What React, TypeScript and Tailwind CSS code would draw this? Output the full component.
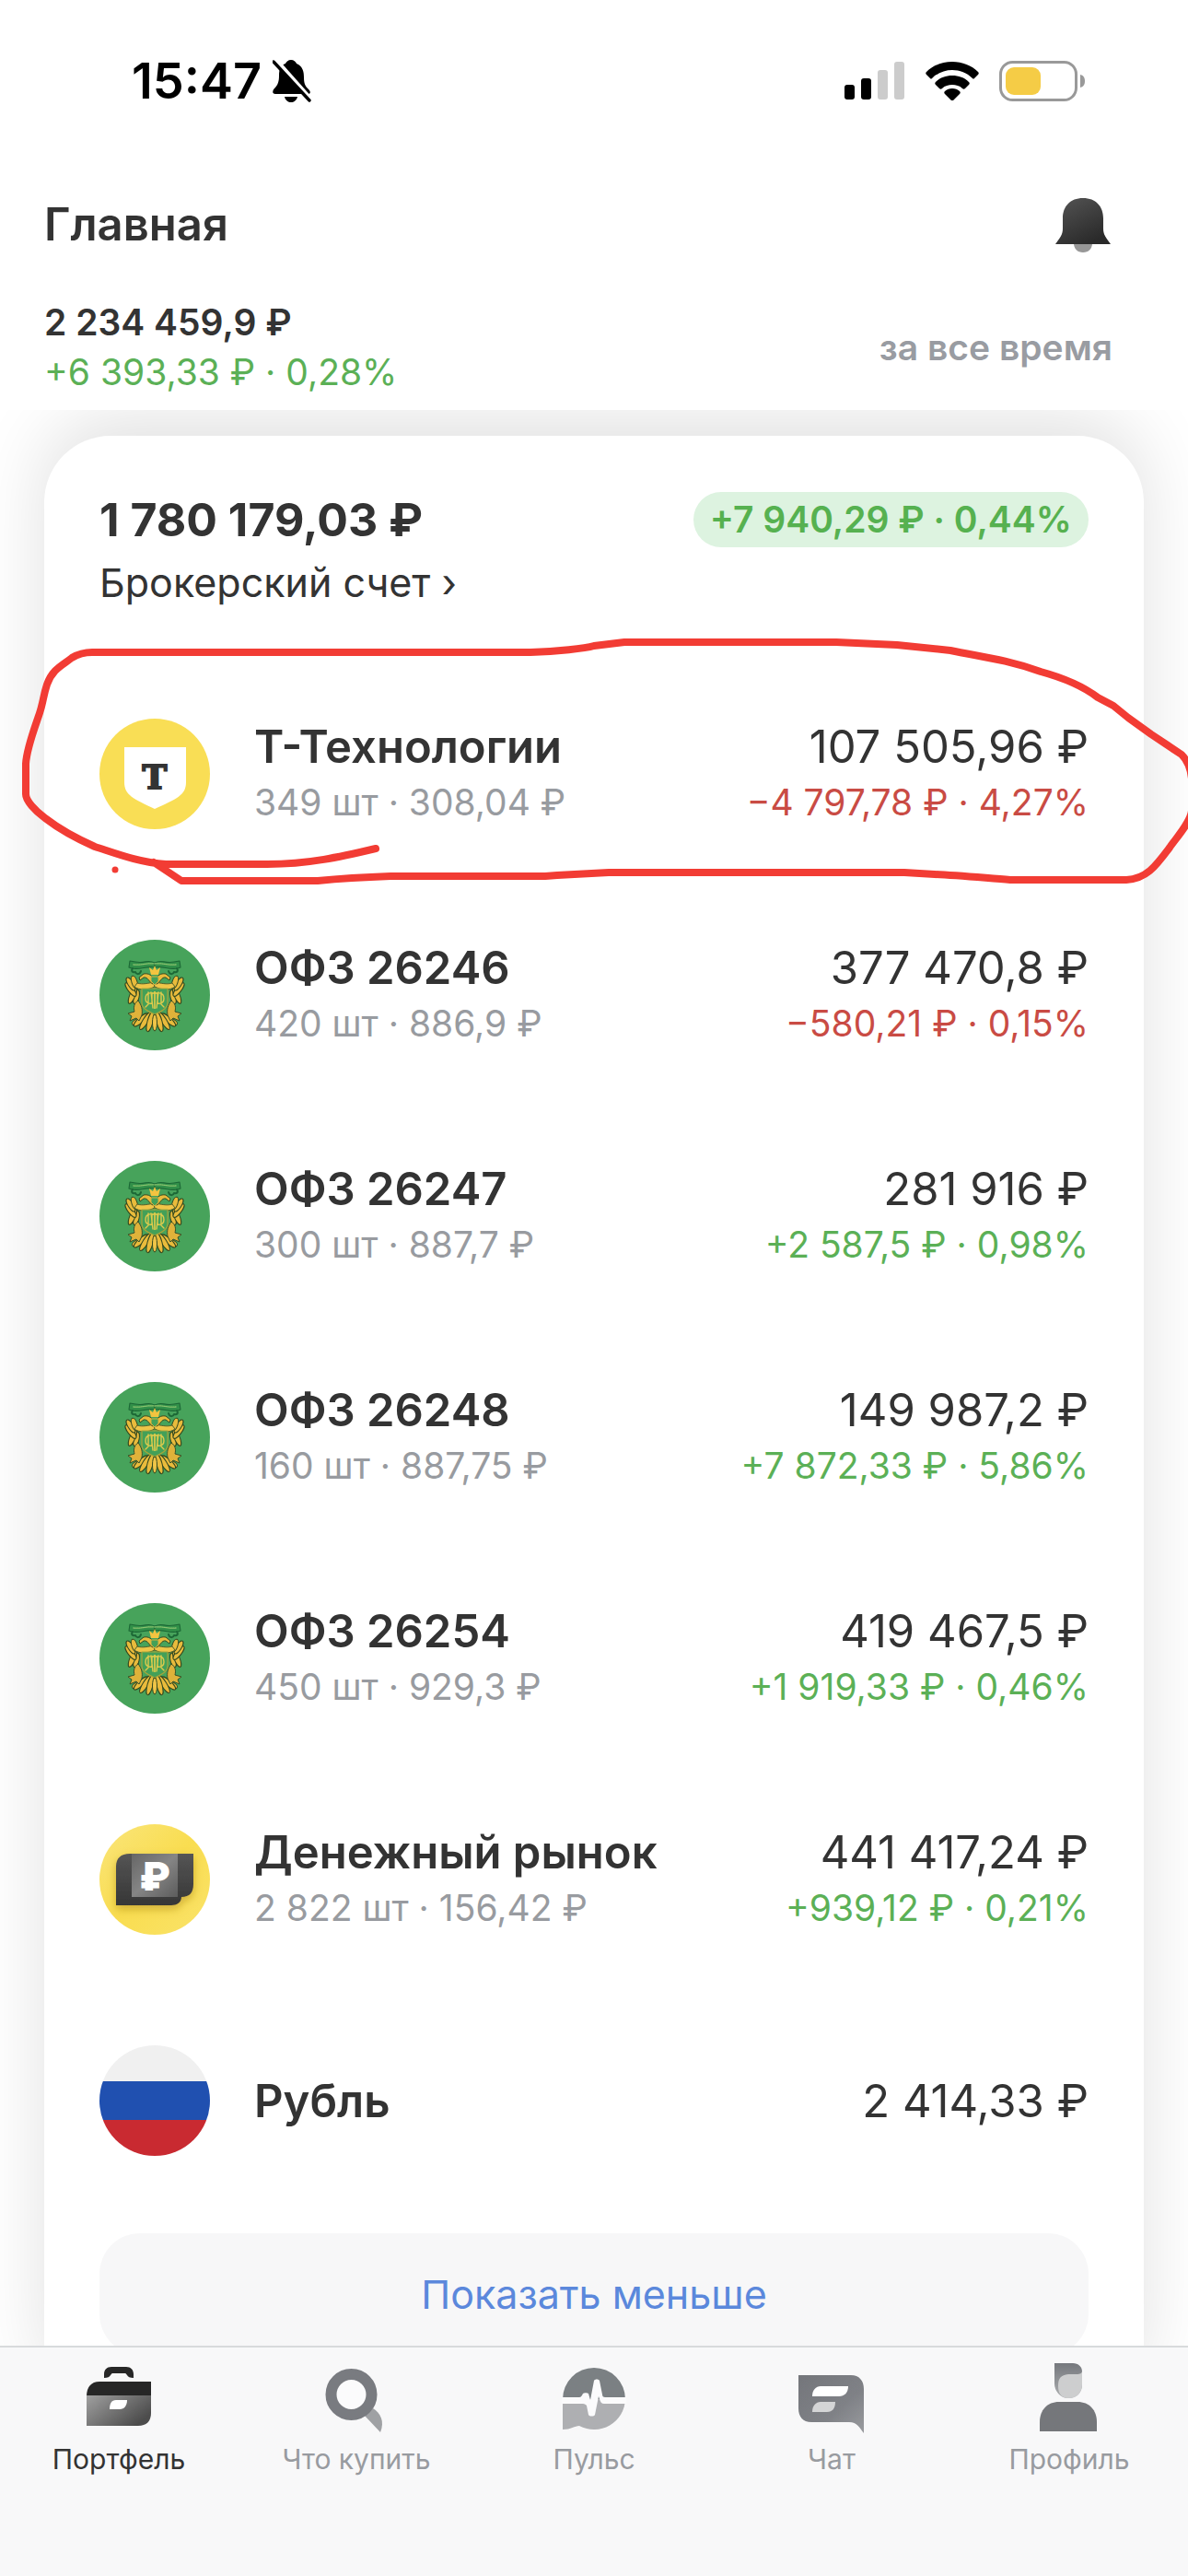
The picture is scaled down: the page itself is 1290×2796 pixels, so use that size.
import React from "react";

type Trend = "up" | "down";

interface Holding {
  name: string;
  details?: string;
  value: string;
  change?: string;
  trend?: Trend;
  logo: React.ReactNode;
}

function TechLogo() {
  return (
    <svg viewBox="0 0 120 120" className="size-[120px] shrink-0" aria-hidden="true">
      <circle cx="60" cy="60" r="60" fill="#f9de55" />
      <path d="M27 31h67v38c0 14-10 18-34 29-23-11-33-15-33-29z" fill="#fff" />
      <text
        x="60"
        y="76"
        textAnchor="middle"
        fontFamily="DejaVu Serif"
        fontWeight="700"
        fontSize="36"
        fill="#333"
        stroke="#333"
        strokeWidth="2"
      >
        Т
      </text>
    </svg>
  );
}

function EmblemHalf() {
  return (
    <g strokeLinejoin="round" strokeLinecap="round">
      <g fill="#e9bb3c" stroke="#33481f" strokeWidth="1">
        <ellipse cx="41" cy="89" rx="3" ry="6" transform="rotate(62 41 89)" />
        <ellipse cx="45" cy="87" rx="3" ry="10" transform="rotate(48 45 87)" />
        <ellipse cx="50" cy="88" rx="3" ry="11" transform="rotate(32 50 88)" />
        <ellipse cx="55" cy="89" rx="3" ry="11" transform="rotate(15 55 89)" />
      </g>
      <g fill="#e9bb3c" stroke="#33481f" strokeWidth="1">
        <ellipse cx="40" cy="62" rx="3" ry="8" transform="rotate(12 40 62)" />
        <ellipse cx="36" cy="60" rx="3" ry="10" transform="rotate(22 36 60)" />
        <ellipse cx="34" cy="54" rx="3" ry="9" transform="rotate(-38 34 54)" />
        <ellipse cx="34" cy="48" rx="3" ry="8" transform="rotate(-32 34 48)" />
        <ellipse cx="38" cy="46" rx="3" ry="7" transform="rotate(-18 38 46)" />
      </g>
      <path d="M60 51c-8 4-17 4-22 0l3-4c6 2 12 0 19-1z" fill="#f0c548" stroke="#54602a" strokeWidth="1" />
      <path d="M58 48c-4-1-5-8-10-7l-4 3-1-3 5-4c6-1 9 2 11 6z" fill="#e9bb3c" stroke="#2e4b23" strokeWidth="1" />
      <path d="M42 66c-5 3-5 8-4 12l-7 2 4 3-2 5 7-3 3 3 3-6c1-6 0-11-4-16z" fill="#dfb23a" stroke="#36502a" strokeWidth="1" />
      <path d="M46 53h14v28c-8-3-14-6-14-13z" fill="#43a058" />
      <path d="M46 53h14M46 54v14c0 6 5 9 14 13" stroke="#a8a53a" strokeWidth="1.2" fill="none" />
      <path d="M57 58c-6-1-7 3-7 6s2 6 7 5zM53 57v13l-3 3M56 57l2 17" stroke="#dfcb4d" strokeWidth="1.4" fill="none" />
      <path d="M60 25c-8-4-10 1-21-1l-6-1-1 7 3 1c10 2 16-3 25-1z" fill="#329049" stroke="#1c6836" strokeWidth="1.1" />
      <path d="M36 31c-2 3 0 5 3 4 1 3 5 3 6-1" stroke="#1c6836" strokeWidth="2" fill="none" />
      <path d="M37 27c9 1 14-2 23-1" stroke="#8cc36f" strokeWidth="1.3" strokeDasharray="1 1" fill="none" />
    </g>
  );
}

function EmblemLogo() {
  return (
    <svg viewBox="0 0 120 120" className="size-[120px] shrink-0" aria-hidden="true">
      <circle cx="60" cy="60" r="60" fill="#47a35b" />
      <EmblemHalf />
      <g transform="translate(120 0) scale(-1 1)">
        <EmblemHalf />
      </g>
      <path d="M54 30l4 3 2-5 2 5 4-3-2 8h-8z" fill="#f3c440" />
      <path d="M56 40h8v5l-4 4-4-4z" fill="#43a058" stroke="#d5b13d" strokeWidth="1" />
      <path d="M60 56v19M57 58h6" stroke="#e5cd4b" strokeWidth="1.6" />
      <ellipse cx="60" cy="90" rx="2.5" ry="9" fill="#f0c548" stroke="#33481f" strokeWidth="1" />
    </svg>
  );
}

function MoneyLogo() {
  return (
    <svg viewBox="0 0 120 120" className="size-[120px] shrink-0" aria-hidden="true">
      <defs>
        <linearGradient id="coin" x1="0" y1="0" x2="1" y2="1">
          <stop offset="0" stopColor="#fae57b" />
          <stop offset=".5" stopColor="#f9dd50" />
          <stop offset="1" stopColor="#fae36a" />
        </linearGradient>
        <linearGradient id="band" x1="0" y1="0" x2="1" y2="1">
          <stop offset="0" stopColor="#666" />
          <stop offset=".5" stopColor="#858585" />
          <stop offset="1" stopColor="#5c5c5c" />
        </linearGradient>
        <linearGradient id="note" x1="0" y1="0" x2="0" y2="1">
          <stop offset="0" stopColor="#555" />
          <stop offset="1" stopColor="#363636" />
        </linearGradient>
        <filter id="noteShadow" x="-30%" y="-30%" width="160%" height="180%">
          <feDropShadow dx="0" dy="4" stdDeviation="5" floodColor="#a07a10" floodOpacity=".5" />
        </filter>
      </defs>
      <circle cx="60" cy="60" r="60" fill="url(#coin)" />
      <g filter="url(#noteShadow)">
        <path d="M33 32h69v33c0 9-4 14-13 14 0 6-5 9-11 9H18V46c0-9 5-14 15-14z" fill="url(#note)" />
      </g>
      <path d="M35 32h50v47H35z" fill="url(#band)" />
      <text x="60" y="72" textAnchor="middle" fontFamily="Inter" fontWeight="900" fontSize="43" fill="#fff">
        ₽
      </text>
    </svg>
  );
}

function FlagLogo() {
  return (
    <span className="flex size-[120px] shrink-0 flex-col overflow-hidden rounded-full" aria-hidden="true">
      <span className="flex-1 bg-[#f0f0f0]" />
      <span className="h-[42px] bg-[#2050b0]" />
      <span className="flex-1 bg-[#c92a31]" />
    </span>
  );
}

const holdings: Holding[] = [
  { name: "Т-Технологии", details: "349 шт · 308,04 ₽", value: "107 505,96 ₽", change: "−4 797,78 ₽ · 4,27%", trend: "down", logo: <TechLogo /> },
  { name: "ОФЗ 26246", details: "420 шт · 886,9 ₽", value: "377 470,8 ₽", change: "−580,21 ₽ · 0,15%", trend: "down", logo: <EmblemLogo /> },
  { name: "ОФЗ 26247", details: "300 шт · 887,7 ₽", value: "281 916 ₽", change: "+2 587,5 ₽ · 0,98%", trend: "up", logo: <EmblemLogo /> },
  { name: "ОФЗ 26248", details: "160 шт · 887,75 ₽", value: "149 987,2 ₽", change: "+7 872,33 ₽ · 5,86%", trend: "up", logo: <EmblemLogo /> },
  { name: "ОФЗ 26254", details: "450 шт · 929,3 ₽", value: "419 467,5 ₽", change: "+1 919,33 ₽ · 0,46%", trend: "up", logo: <EmblemLogo /> },
  { name: "Денежный рынок", details: "2 822 шт · 156,42 ₽", value: "441 417,24 ₽", change: "+939,12 ₽ · 0,21%", trend: "up", logo: <MoneyLogo /> },
  { name: "Рубль", value: "2 414,33 ₽", logo: <FlagLogo /> },
];

function HoldingRow({ item }: { item: Holding }) {
  return (
    <li className="flex h-60 items-center gap-12">
      {item.logo}
      <div className="min-w-0 flex-1 pt-0.5">
        <p className="text-[49px] leading-[60px] font-semibold">{item.name}</p>
        {item.details && <p className="text-[39px] leading-[60px] text-[#989ba0]">{item.details}</p>}
      </div>
      <div className="pt-0.5 text-right whitespace-nowrap">
        <p className="text-[49px] leading-[60px]">{item.value}</p>
        {item.change && (
          <p className={item.trend === "up" ? "text-[39px] leading-[60px] text-[#5bb056]" : "text-[39px] leading-[60px] text-[#c94b44]"}>
            {item.change}
          </p>
        )}
      </div>
    </li>
  );
}

function StatusBar() {
  return (
    <div className="flex h-[60px] items-center justify-between pr-[111px] pl-[143px] text-black">
      <div className="flex items-center gap-3">
        <span className="text-[54px] leading-[60px] font-semibold">15:47</span>
        <svg viewBox="0 0 42 46" className="h-[46px] w-[42px]" role="img" aria-label="Без звука">
          <path d="M20 0c3 0 5 2 6 4 7 3 8 9 8 15 0 8 2 10 6 14 2 3 0 4-2 4H3c-4 0-3-4-1-6 4-4 5-8 5-14C7 10 9 6 14 4c1-2 3-4 6-4z" />
          <path d="M13 40h14c-1 4-4 6-7 6s-6-2-7-6z" />
          <path d="M4 0l39 44" stroke="#fff" strokeWidth="4" />
          <path d="M1 2l39 42" stroke="#000" strokeWidth="3.4" strokeLinecap="round" />
        </svg>
      </div>
      <div className="flex items-center">
        <svg viewBox="0 0 66 42" className="mr-[22px] h-[42px] w-[66px]" role="img" aria-label="Сигнал сети">
          <rect x="0" y="25" width="11" height="16" rx="3" />
          <rect x="18" y="18" width="11" height="23" rx="3" />
          <rect x="36" y="9" width="11" height="32" rx="3" fill="#ccc" />
          <rect x="54" y="0" width="11" height="41" rx="3" fill="#ccc" />
        </svg>
        <svg viewBox="0 0 58 42" className="mr-[22px] h-[42px] w-[58px]" role="img" aria-label="Wi-Fi">
          <path d="M29 0c11 0 21 4 28 11 1 1 1 2 0 3l-4 4c-1 1-1 1-2 0C45 12 37 9 29 9S13 12 7 18c-1 1-1 1-2 0l-4-4c-1-1-1-2 0-3C8 4 18 0 29 0z" />
          <path d="M29 15c7 0 13 2 18 7 1 1 1 2 0 3l-4 4c-1 1-2 1-3 0-3-3-7-4-11-4s-8 1-11 4c-1 1-2 1-3 0l-4-4c-1-1-1-2 0-3 5-5 11-7 18-7z" />
          <path d="M29 29c3 0 6 1 8 3 1 1 1 2 0 3l-7 7c-1 1-1 1-2 0l-7-7c-1-1-1-2 0-3 2-2 5-3 8-3z" />
        </svg>
        <svg viewBox="0 0 94 44" className="h-[44px] w-[94px]" role="img" aria-label="Заряд батареи">
          <rect x="1.5" y="1.5" width="82" height="41" rx="13" fill="none" stroke="#999" strokeWidth="3" />
          <rect x="7" y="7" width="38" height="30" rx="9" fill="#f5cc46" />
          <path d="M88 15c4 1 5 4 5 7s-1 6-5 7z" fill="#999" />
        </svg>
      </div>
    </div>
  );
}

function BriefcaseIcon() {
  return (
    <svg viewBox="0 0 80 80" className="size-20 overflow-visible" aria-hidden="true">
      <defs>
        <linearGradient id="case" x1="0" y1="0" x2="1" y2=".6">
          <stop offset="0" stopColor="#a0a0a0" />
          <stop offset="1" stopColor="#4c4c4c" />
        </linearGradient>
      </defs>
      <path d="M24 21v-4c0-5 3-8 8-8h16c5 0 8 3 8 8v4c-4 0-6-1-7-3-1-1-1-2-2-2H33c-1 0-1 1-2 2-1 2-3 3-7 3z" fill="#272727" />
      <path d="M19 25h56v16H5c0-10 5-16 14-16z" fill="#272727" />
      <path d="M5 40h70v19c0 9-5 14-14 14H5z" fill="url(#case)" />
      <path d="M37 45h12c0 6-3 10-8 10H30c0-6 2-10 7-10z" fill="#fff" />
    </svg>
  );
}

function SearchIcon() {
  return (
    <svg viewBox="0 0 80 80" className="size-20 overflow-visible" aria-hidden="true">
      <path d="M49 62l9-8c8 5 13 14 8 26z" fill="#9fa1a4" />
      <circle cx="34.5" cy="39" r="22" fill="#fbfbfc" stroke="#797b80" strokeWidth="12" />
    </svg>
  );
}

function PulseIcon() {
  return (
    <svg viewBox="0 0 80 80" className="size-20 overflow-visible" aria-hidden="true">
      <path d="M6 44a34 34 0 0 1 68 0z" fill="#7b8083" />
      <path d="M6 44h68a34 34 0 0 1-50 29c-5 0-9 4-18 4z" fill="#aeafb2" />
      <path d="M5 42h19c2 0 3-2 4-4 1-1 5-1 6 0l2 7 4-21c1-2 5-2 6 0l3 15c0 2 1 3 3 3h23v7H51c-3 0-4-2-5-5l-1-3-4 20c-1 2-6 2-7 0l-2-10c-1-1-2-2-4-2H5z" fill="#fbfbfc" />
    </svg>
  );
}

function ChatIcon() {
  return (
    <svg viewBox="0 0 80 80" className="size-20 overflow-visible" aria-hidden="true">
      <defs>
        <linearGradient id="bubble" x1="0" y1="0" x2="1" y2="1">
          <stop offset="0" stopColor="#74767b" />
          <stop offset=".6" stopColor="#7f8186" />
          <stop offset="1" stopColor="#999b9f" />
        </linearGradient>
      </defs>
      <path d="M4 18h57c9 0 14 6 14 15v48c-5-6-7-12-16-12H18C9 69 4 63 4 54z" fill="url(#bubble)" />
      <path d="M28 30h30c0 7-4 11-10 11H19c0-7 4-11 9-11z" fill="#fff" />
      <path d="M28 47h16c0 7-3 11-9 11H19c0-7 4-11 9-11z" fill="#d4d5d6" />
    </svg>
  );
}

function ProfileIcon() {
  return (
    <svg viewBox="0 0 80 80" className="size-20 overflow-visible" aria-hidden="true">
      <defs>
        <linearGradient id="hair" x1="0" y1="0" x2="0" y2="1">
          <stop offset="0" stopColor="#75787d" />
          <stop offset="1" stopColor="#adafb1" />
        </linearGradient>
      </defs>
      <path d="M24 5h20c6 0 10 4 10 9v14c0 9-6 15-15 15s-15-8-15-16z" fill="url(#hair)" />
      <path d="M54 14v14c0 9-6 15-15 15-7 0-11-5-11-13 0-9 3-12 11-13 9 0 14 1 15-3z" fill="#cdcecf" />
      <path d="M8 79V69c0-13 8-22 21-22h20c13 0 21 9 21 22v10z" fill="#75777b" />
    </svg>
  );
}

const tabs = [
  { label: "Портфель", icon: <BriefcaseIcon />, active: true },
  { label: "Что купить", icon: <SearchIcon />, active: false },
  { label: "Пульс", icon: <PulseIcon />, active: false },
  { label: "Чат", icon: <ChatIcon />, active: false },
  { label: "Профиль", icon: <ProfileIcon />, active: false },
];

export default function App() {
  return (
    <div className="flex h-screen flex-col overflow-hidden bg-white font-['Inter',sans-serif] text-[#333]">
      <header className="bg-white pt-[58px] pb-3.5">
        <StatusBar />
        <div className="mt-24 flex items-center justify-between pr-[84px] pl-12">
          <h1 className="text-[49px] leading-[60px] font-semibold">Главная</h1>
          <button type="button" aria-label="Уведомления">
            <svg viewBox="0 0 60 60" className="size-[60px]" aria-hidden="true">
              <defs>
                <linearGradient id="bell" x1="0" y1="0" x2=".6" y2="1">
                  <stop offset="0" stopColor="#555" />
                  <stop offset="1" stopColor="#2a2a2a" />
                </linearGradient>
              </defs>
              <path d="M20 50h20c0 6-4 10-10 10s-10-4-10-10z" fill="#979797" />
              <path d="M30 1c14 0 22 9 22 22v11c0 7 3 10 8 17H0c5-7 8-10 8-17V23C8 10 16 1 30 1z" fill="url(#bell)" />
            </svg>
          </button>
        </div>
        <div className="mt-[49px] flex items-center justify-between pr-[82px] pl-12">
          <div>
            <p className="text-[39px] leading-[54px] font-semibold">2 234 459,9 ₽</p>
            <p className="text-[39px] leading-[54px] text-[#5bb056]">+6 393,33 ₽ · 0,28%</p>
          </div>
          <button type="button" className="text-[39px] leading-[54px] font-semibold text-[#999ca2]">
            за все время
          </button>
        </div>
      </header>

      <main className="relative min-h-0 flex-1 overflow-hidden">
        <section className="mx-12 mt-7 rounded-[72px] bg-white px-[60px] pt-[61px] pb-16 shadow-[0_-20px_80px_rgba(0,0,0,0.12)]">
          <div className="flex items-center justify-between">
            <h2 className="text-[50px] leading-[60px] font-bold">1 780 179,03 ₽</h2>
            <span className="rounded-full bg-[#ddf3e0] px-[18px] text-[39px] leading-[60px] font-semibold text-[#56b150]">
              +7 940,29 ₽ · 0,44%
            </span>
          </div>
          <a href="#account" className="mt-3 block text-[43px] leading-[52px]">
            Брокерский счет ›
          </a>
          <ul className="mt-[62px]">
            {holdings.map((item) => (
              <HoldingRow key={item.name} item={item} />
            ))}
          </ul>
          <button type="button" className="mt-6 h-[132px] w-full rounded-[44px] bg-[#f7f7f8] text-[43px] text-[#5b88dc]">
            Показать меньше
          </button>
        </section>
        <svg
          viewBox="0 685 1290 290"
          preserveAspectRatio="none"
          className="pointer-events-none absolute inset-x-0 top-60 h-[290px] w-full"
          aria-hidden="true"
        >
          <g fill="none" stroke="#f23c34" strokeWidth="8" strokeLinecap="round" strokeLinejoin="round">
            <path d="M408 921C370 930 335 938 290 938H180C150 936 125 926 103 919C85 911 62 898 49 888C38 880 28 869 28 862V829C29 812 38 789 43 774C47 762 47 755 51 743C57 726 68 722 78 714Q88 708 100 708H576C605 707 635 704 645 701L678 697H908L974 700L1032 706C1065 713 1090 715 1130 729C1152 735 1175 744 1192 757L1209 766L1225 779L1250 797L1283 819C1290 826 1293 835 1294 845V880C1293 893 1275 912 1270 920C1255 940 1245 954 1223 955H1097C1070 953 1040 950 1015 949L982 947H661L605 950L592 951H424C395 952 365 954 345 956H197L167 936" />
          </g>
          <circle cx="125" cy="944" r="3.5" fill="#f23c34" />
        </svg>
      </main>

      <nav className="grid h-[250px] shrink-0 grid-cols-5 border-t-2 border-[#d8dadc] bg-[#f8f8f9]" aria-label="Разделы">
        {tabs.map((tab) => (
          <button
            key={tab.label}
            type="button"
            aria-current={tab.active ? "page" : undefined}
            className={tab.active ? "flex flex-col items-center pt-3 text-[#333]" : "flex flex-col items-center pt-3 text-[#989ba0]"}
          >
            {tab.icon}
            <span className="mt-2.5 text-[30px] leading-[38px] whitespace-nowrap">{tab.label}</span>
          </button>
        ))}
      </nav>
    </div>
  );
}
